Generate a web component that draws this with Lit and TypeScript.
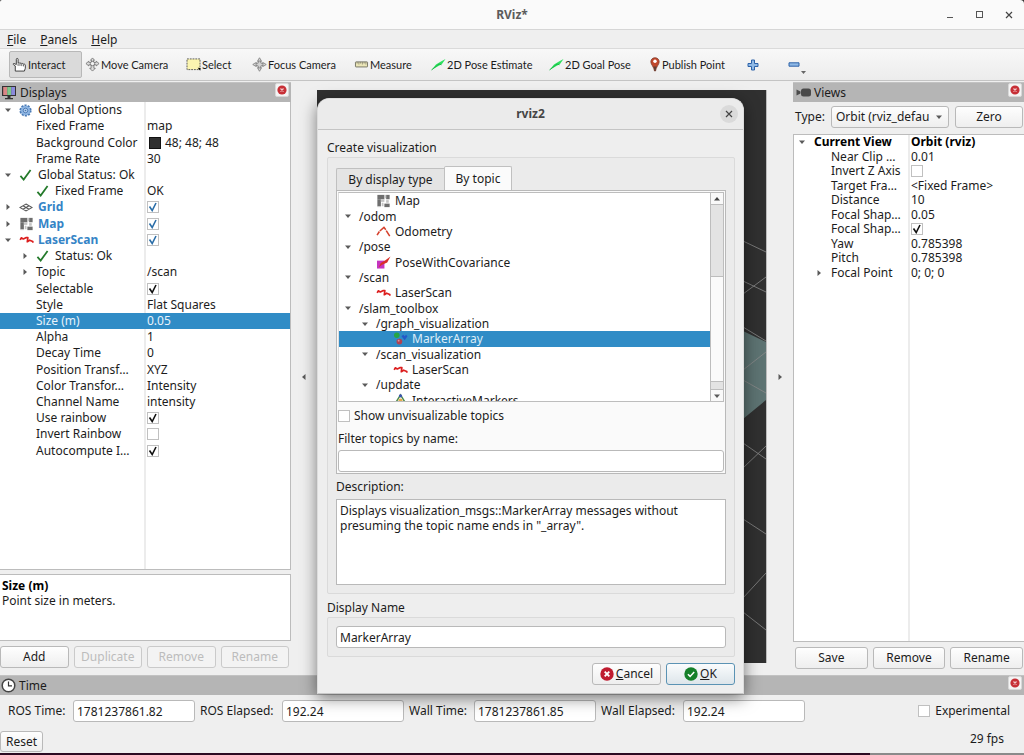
import { LitElement, html, css, svg, nothing } from "lit";
import type { TemplateResult } from "lit";
import { customElement, property } from "lit/decorators.js";
import { classMap } from "lit/directives/class-map.js";
import { styleMap } from "lit/directives/style-map.js";

/* ---------- icons ---------- */

const mapTiles = svg`
  <g fill="#6e6e6e"><rect x="1" y="1" width="8" height="5"/><rect x="1" y="6" width="4" height="8"/><rect x="11" y="1" width="4" height="5"/><rect x="9" y="11" width="6" height="4"/></g>
  <g fill="#c4c4c4"><rect x="5" y="6" width="4" height="3"/><rect x="9" y="1" width="2" height="4"/><rect x="11" y="7" width="3" height="3"/><rect x="6" y="10" width="2" height="4"/><rect x="1" y="14" width="4" height="1"/></g>`;

const icons: Record<string, { box: string; w: number; h: number; art: TemplateResult }> = {
  hand: { box: "0 0 16 16", w: 15, h: 15, art: svg`<path d="M3.500 15V9.500L1.600 8.200c-.7-.6-.3-1.500.6-1.300L4.600 8V2.400c0-1.200 1.900-1.200 1.900 0V6.600c.4-.6 1.700-.6 2 .2.500-.5 1.700-.4 2 .4.500-.5 1.600-.3 1.900.5.6-.3 1.800 0 1.800 1V12l-1 3z" fill="#fff" stroke="#3a3a3a" stroke-linejoin="round"/><path d="M6.500 7v2.500M8.500 7v2.500M10.400 7.500v2.200M12.300 8v2" stroke="#3a3a3a" stroke-width=".8"/>` },
  move: { box: "0 0 16 16", w: 15, h: 15, art: svg`<path d="M8 1l2.200 2.500H9v2.200h3V4.500L15 7l-3 2.500V8.300H9.500V12H11l-3 3-3-3h1.500V8.300H4v1.200L1 7l3-2.500v1.200h3V3.500H5.800z" fill="#ddd" stroke="#666" stroke-width=".8" stroke-linejoin="round"/><circle cx="8" cy="7" r="2.300" fill="#f3f3f3" stroke="#666" stroke-width=".8"/>` },
  select: { box: "0 0 16 14", w: 15, h: 13, art: svg`<rect x="1" y="1" width="14" height="11.500" fill="#fbf5b0" stroke="#555" stroke-dasharray="2 1"/><path d="M12.500 10.500l3 .2-.2 3z" fill="#000"/>` },
  focus: { box: "0 0 16 16", w: 15, h: 15, art: svg`<path d="M8 .8l2 3.200H9v2a2.600 2.600 0 0 1 1 1h2V6l3.200 2L12 10V9h-2a2.600 2.600 0 0 1-1 1v2h1l-2 3.200L6 12h1v-2a2.600 2.600 0 0 1-1-1H4v1L.8 8 4 6v1h2a2.600 2.600 0 0 1 1-1V4H6z" fill="#d4d4d4" stroke="#777" stroke-width=".8"/><circle cx="8" cy="8" r="3.600" fill="none" stroke="#8a8a8a" stroke-width=".9"/>` },
  ruler: { box: "0 0 15 8", w: 15, h: 7, art: svg`<rect x=".6" y="1" width="13.800" height="5.800" rx=".6" fill="#ebe6b8" stroke="#6c6a5c"/><path d="M2.500 1v2M4.500 1v3M6.500 1v2M8.500 1v3M10.500 1v2M12.500 1v3" stroke="#6c6a5c" stroke-width=".7"/>` },
  arrow: { box: "0 0 15 13", w: 15, h: 13, art: svg`<path d="M.5 12L5 6.500 9.500 3.800 14.500 1 11 6 6.500 8.500z" fill="#2fe05f"/><path d="M.5 12L8 6l2.500.8" stroke="#12b33e" stroke-width=".8" fill="none"/>` },
  pin: { box: "-1 0 12 15", w: 12, h: 15, art: svg`<path d="M5 .7C2.500.7.8 2.500.8 4.800.8 7.500 4 10 4.500 14h1C6 10 9.200 7.500 9.200 4.800 9.200 2.500 7.500.7 5 .7z" fill="#c0472c" stroke="#7a3524" stroke-width=".7"/><path d="M3.500 9.500L4.600 14h.8l1.100-4.500z" fill="#5b4038"/><circle cx="5" cy="4.300" r="1.700" fill="#fff"/>` },
  plus: { box: "0 0 12 12", w: 12, h: 12, art: svg`<path d="M4.500 1h3v3.500H11v3H7.500V11h-3V7.500H1v-3h3.500z" fill="#8fb9e6" stroke="#2d62a8" stroke-linejoin="round"/>` },
  minus: { box: "0 0 12 5", w: 12, h: 5, art: svg`<rect x="1" y=".8" width="10" height="3.400" fill="#8fb9e6" stroke="#2d62a8" stroke-linejoin="round"/>` },
  displays: { box: "0 0 16 15", w: 16, h: 15, art: svg`<rect x="1" y="1" width="14" height="10" fill="#333"/><rect x="2.200" y="2" width="4" height="8" fill="#d98686"/><rect x="6.200" y="2" width="4" height="8" fill="#7fc78a"/><rect x="10.200" y="2" width="3.800" height="8" fill="#8b8bdc"/><path d="M6.500 11h3v2H12v1.300H4V13h2.500z" fill="#333"/>` },
  camera: { box: "-2 0 17 9", w: 17, h: 9, art: svg`<rect x="5" y=".5" width="10" height="8" rx="2.500" fill="#4a4a4a"/><path d="M.5 1.500l4 2v2l-4 2z" fill="#4a4a4a"/>` },
  clock: { box: "0 0 15 15", w: 15, h: 15, art: svg`<circle cx="7.500" cy="7.500" r="6.300" fill="#fff" stroke="#444" stroke-width="1.500"/><path d="M7.500 3.500v4.300H11" fill="none" stroke="#333" stroke-width="1.200"/>` },
  gear: { box: "0 0 16 16", w: 13, h: 13, art: svg`<circle cx="8" cy="8" r="6.300" fill="#7aa5d8" stroke="#4a7ab5" stroke-width="2.400" stroke-dasharray="2.500 1.460"/><circle cx="8" cy="8" r="5.500" fill="#8db5e3"/><circle cx="8" cy="8" r="2.800" fill="#b9d2ee" stroke="#4271ad"/><circle cx="8" cy="8" r="1" fill="#4271ad"/>` },
  check: { box: "0 0 14 13", w: 13, h: 12, art: svg`<path d="M1.500 7.500L5 11.500 12.500 1" fill="none" stroke="#247a2b" stroke-width="1.900"/>` },
  grid: { box: "0 0 16 10", w: 14, h: 9, art: svg`<path d="M8 1l7 4-7 4-7-4zM4.500 3l7 4M11.500 3l-7 4" fill="none" stroke="#555" stroke-width="1.200"/>` },
  map: { box: "0 0 16 16", w: 15, h: 14, art: mapTiles },
  laser: { box: "0 0 16 10", w: 15, h: 9, art: svg`<path d="M1 5.500l1.200-2.300 2.300 1.200L7.800 2.800l1.700.2-.6 4.500 2.600-1.700L15 7.200v1.500" fill="none" stroke="#dc1e1e" stroke-width="1.900" stroke-linejoin="round"/>` },
  odom: { box: "0 0 16 12", w: 15, h: 11, art: svg`<path d="M1 10l2.500-4M4 5.500L8.500 1.500l2 2.500M11 5l3.800 6" fill="none" stroke="#d5402c" stroke-width="1.700"/>` },
  pose: { box: "0 0 16 14", w: 15, h: 13, art: svg`<rect x="1" y="5" width="8" height="8.500" fill="#c534c0"/><path d="M3 12l2-4.500L10 4.500l5.500-4L12 7 6.500 9.500z" fill="#d92f2a"/>` },
  markers: { box: "0 0 16 14", w: 15, h: 13, art: svg`<circle cx="4" cy="3.500" r="3" fill="#26a646"/><path d="M9 4.500l2-1.500 1.500 1.500L14 3l1.500 1.500L12.500 9z" fill="#2459c8"/><circle cx="6.800" cy="10.300" r="3.100" fill="#b04252"/><circle cx="6" cy="9.300" r="1" fill="#df97a0"/>` },
  interactive: { box: "0 0 16 15", w: 15, h: 14, art: svg`<path d="M8 2l5.500 9h-11z" fill="none" stroke="#4c8a50" stroke-width="1.600"/><circle cx="8" cy="3" r="1.700" fill="#3b54b0"/><circle cx="8" cy="8" r="2.200" fill="#e3ac4c"/><circle cx="3" cy="11" r="2" fill="#cc3333"/><circle cx="13" cy="11" r="2" fill="#2d9a3c"/>` },
  cancel: { box: "0 0 14 14", w: 14, h: 14, art: svg`<circle cx="7" cy="7" r="6.700" fill="#bf1b2f"/><path d="M4.700 4.700l4.600 4.600M9.300 4.700L4.700 9.300" stroke="#fff" stroke-width="1.900"/>` },
  ok: { box: "0 0 14 14", w: 14, h: 14, art: svg`<circle cx="7" cy="7" r="6.700" fill="#15802a"/><path d="M3.900 7.300l2.200 2.100 4.100-4.300" fill="none" stroke="#fff" stroke-width="1.500"/>` },
  dockClose: { box: "0 0 10 10", w: 10, h: 10, art: svg`<circle cx="5" cy="5" r="4.600" fill="#c72f36"/><path d="M3.500 3.500l3 3M6.500 3.500l-3 3" stroke="#f3c8ca" stroke-width="1.200"/>` },
  open: { box: "0 0 8 8", w: 8, h: 8, art: svg`<path d="M1 2.500h6L4 6z" fill="#5a5a5a"/>` },
  closed: { box: "0 0 8 8", w: 8, h: 8, art: svg`<path d="M2.500 1v6L6 4z" fill="#5a5a5a"/>` },
  left: { box: "0 0 8 8", w: 8, h: 8, art: svg`<path d="M5.500 1v6L2 4z" fill="#5a5a5a"/>` },
  up: { box: "0 0 8 8", w: 8, h: 8, art: svg`<path d="M1 5.500h6L4 2z" fill="#444"/>` },
  cross: { box: "0 0 8 8", w: 8, h: 8, art: svg`<path d="M1 1l6 6M7 1L1 7" stroke="#444" stroke-width="1.200"/>` },
  maximize: { box: "0 0 8 8", w: 8, h: 8, art: svg`<rect x=".5" y=".5" width="6" height="6" fill="none" stroke="#555"/>` },
  minimize: { box: "0 0 8 8", w: 8, h: 8, art: svg`<path d="M1 6.500h6" stroke="#555"/>` },
};

const icon = (name: string) => {
  const i = icons[name];
  return html`<svg class="icon" width=${i.w} height=${i.h} viewBox=${i.box} aria-hidden="true">${i.art}</svg>`;
};

/* ---------- shared styles ---------- */

const base = css`
  * { box-sizing: border-box; }
  button, input, select, textarea { font: inherit; color: inherit; margin: 0; }
  .icon { display: block; flex: none; }
  button { display: flex; align-items: center; justify-content: center; padding: 0; white-space: nowrap; }
  .push {
    height: 22px; border: 1px solid #b9b9b9; border-radius: 3px;
    background: linear-gradient(#fefefe, #eeeeee);
  }
  .push:disabled { color: #bcbcbc; border-color: #cacaca; background: #f3f3f3; }
  input[type="text"], textarea {
    border: 1px solid #b9b9b9; border-radius: 3px; background: #fff; outline: none;
  }
  input[type="text"] { height: 22px; padding: 0 3px; min-width: 0; }
  input[type="checkbox"] {
    appearance: none; width: 12px; height: 12px; flex: none; display: block;
    border: 1px solid #c0c0c0; background: #fff center / 10px 10px no-repeat;
  }
  input[type="checkbox"]:checked {
    background-image: url("data:image/svg+xml,%3Csvg xmlns='http://www.w3.org/2000/svg' viewBox='0 0 10 10'%3E%3Cpath d='M1.500 4.500L4.200 8.500 8 1' fill='none' stroke='%23111' stroke-width='1.600'/%3E%3C/svg%3E");
  }
  input[type="checkbox"].blue:checked {
    background-image: url("data:image/svg+xml,%3Csvg xmlns='http://www.w3.org/2000/svg' viewBox='0 0 10 10'%3E%3Cpath d='M1.500 4.500L4.200 8.500 8 1' fill='none' stroke='%232b6ea8' stroke-width='1.600'/%3E%3C/svg%3E");
  }
`;

/* ---------- property table ---------- */

interface Row {
  name: string;
  value?: string;
  checked?: boolean;
  level?: number;
  arrow?: "open" | "closed";
  icon?: string;
  swatch?: boolean;
  style?: "link" | "bold" | "selected";
}

@customElement("property-table")
class PropertyTable extends LitElement {
  @property({ attribute: false }) rows: Row[] = [];

  static styles = [base, css`
    :host { display: block; flex: 1; min-height: 0; overflow: hidden; position: relative;
      background: linear-gradient(#ececec, #ececec) calc(var(--name-column) - 1px) 0 / 2px 100% no-repeat #fff; }
    table { width: 100%; height: var(--table-height); table-layout: fixed; border-collapse: collapse; }
    .name-column { width: var(--name-column); }
    td { padding: 0; line-height: 14px; white-space: nowrap; vertical-align: middle; }
    td + td { padding-left: 2px; }
    .cell { display: flex; align-items: center; height: 14px; }
    .indent { flex: none; height: 8px; }
    .slot { flex: none; display: flex; width: var(--slot); padding-left: 4px; }
    .pic { flex: none; display: flex; width: 19px; align-items: center; }
    .link .cell > .text { color: #3584c6; font-weight: bold; }
    .bold { font-weight: bold; color: #000; }
    .selected { background: #308cc6; color: #e8f3fb; }
    .swatch { width: 12px; height: 12px; margin: 0 4px 0 2px; background: #303030; border: 1px solid #111; }
  `];

  render() {
    return html`<table>
      <colgroup><col class="name-column" /><col /></colgroup>
      <tbody>
        ${this.rows.map((r) => html`<tr class=${r.style ?? ""}>
          <td><div class="cell">
            <span class="indent" style=${styleMap({ width: `${(r.level ?? 0) * 17}px` })}></span>
            <span class="slot">${r.arrow ? icon(r.arrow) : nothing}</span>
            ${r.icon ? html`<span class="pic">${icon(r.icon)}</span>` : nothing}
            <span class="text">${r.name}</span>
          </div></td>
          <td><div class="cell">
            ${r.swatch ? html`<span class="swatch"></span>` : nothing}
            ${r.checked === undefined
              ? r.value ?? nothing
              : html`<input type="checkbox" aria-label=${r.name} class=${classMap({ blue: r.style === "link" })} .checked=${r.checked} />`}
          </div></td>
        </tr>`)}
      </tbody>
    </table>`;
  }
}

/* ---------- dock header ---------- */

@customElement("dock-header")
class DockHeader extends LitElement {
  @property() label = "";
  @property() glyph = "";

  static styles = [base, css`
    :host { display: flex; align-items: center; gap: 3px; height: 20px; padding: 0 2px 0 1px; background: #b5b5b5; border-top: 1px solid #c2c2c2; flex: none; }
    .label { flex: 1; }
    .close { width: 14px; height: 14px; background: #f4f4f4; border: 1px solid #d8d8d8; border-radius: 2px; align-self: flex-start; }
  `];

  render() {
    return html`${icon(this.glyph)}<span class="label">${this.label}</span>
      <button class="close" aria-label="Close ${this.label}">${icon("dockClose")}</button>`;
  }
}

/* ---------- dialog ---------- */

interface Topic { text: string; level: number; icon?: string; selected?: boolean }

const topics: Topic[] = [
  { text: "Map", level: 1, icon: "map" },
  { text: "/odom", level: 0 },
  { text: "Odometry", level: 1, icon: "odom" },
  { text: "/pose", level: 0 },
  { text: "PoseWithCovariance", level: 1, icon: "pose" },
  { text: "/scan", level: 0 },
  { text: "LaserScan", level: 1, icon: "laser" },
  { text: "/slam_toolbox", level: 0 },
  { text: "/graph_visualization", level: 1 },
  { text: "MarkerArray", level: 2, icon: "markers", selected: true },
  { text: "/scan_visualization", level: 1 },
  { text: "LaserScan", level: 2, icon: "laser" },
  { text: "/update", level: 1 },
  { text: "InteractiveMarkers", level: 2, icon: "interactive" },
];

@customElement("display-dialog")
class DisplayDialog extends LitElement {
  static styles = [base, css`
    :host { display: block; background: #eeeeee; border-radius: 12px 12px 0 0; border: 1px solid #dcdcdc; border-bottom-color: #c8c8c8;
      box-shadow: 0 4px 16px rgba(0, 0, 0, 0.5); }
    header { display: grid; grid-template-columns: 28px 1fr 28px; align-items: center; justify-items: center; height: 31px; background: #ebebeb; border-bottom: 1px solid #c4c4c4; border-radius: 11px 11px 0 0; }
    .title { grid-column: 2; font-weight: bold; color: #454545; }
    .close { width: 18px; height: 18px; border: 0; border-radius: 9px; background: #dadada; }
    .body { padding: 9px 8px 8px 9px; }
    .caption { display: block; line-height: 18px; }
    .group { border: 1px solid #dadada; border-radius: 2px; background: #ebebeb; padding: 8px; }
    .tabs { display: flex; align-items: flex-end; height: 24px; }
    .tab { height: 22px; min-width: 108px; border: 1px solid #c0c0c0; border-right: 0; border-bottom: 0; border-radius: 2px 0 0 0; background: #e4e4e4; }
    .tab.on { height: 24px; min-width: 68px; border-right: 1px solid #c0c0c0; border-radius: 2px 2px 0 0; background: #fbfbfb; }
    .pane { border: 1px solid #b9b9b9; background: #fafafa; padding: 1px; }
    .list { display: grid; grid-template-columns: 1fr 13px; height: 210px; border: 1px solid #bdbdbd; border-left-color: #ddd; background: #fff; overflow: hidden; }
    .tree { display: grid; grid-auto-rows: 1fr; height: 215px; margin: 0; padding: 0; list-style: none; }
    .tree li { display: flex; align-items: center; min-height: 0; line-height: 15px; white-space: nowrap; }
    .indent { flex: none; height: 8px; }
    .slot { flex: none; display: flex; width: 20px; padding-left: 5px; }
    .pic { flex: none; display: flex; width: 19px; padding-right: 4px; justify-content: center; }
    .selected { background: #308cc6; color: #dcedf8; }
    .scroll { display: flex; flex-direction: column; height: 208px; border-left: 1px solid #bdbdbd; background: #e3e3e3; }
    .step { display: grid; place-items: center; height: 12px; background: #f9f9f9; border-bottom: 1px solid #bdbdbd; }
    .step.down { border-bottom: 0; border-top: 1px solid #bdbdbd; }
    .before { flex: 72; }
    .thumb { flex: 105; background: #fafafa; border: solid #bdbdbd; border-width: 1px 0; }
    .after { flex: 7; }
    .tick { display: flex; align-items: center; gap: 4px; height: 28px; }
    .filter { display: block; line-height: 18px; margin-bottom: 2px; }
    .wide { display: block; width: 100%; }
    .describe { line-height: 25px; display: block; }
    textarea.wide { height: 86px; resize: none; border-radius: 0; padding: 3px 3px; line-height: 15px; overflow: hidden; }
    .named { margin-top: 5px; }
    .name-group { margin-bottom: 6px; }
    .actions { display: flex; justify-content: flex-end; gap: 5px; }
    .actions .push { width: 69px; gap: 2px; }
    .actions .default { border-color: #5b93b4; background: linear-gradient(#fafcfd, #dde5ea); }
  `];

  render() {
    return html`
      <header><span class="title">rviz2</span><button class="close" aria-label="Close">${icon("cross")}</button></header>
      <div class="body">
        <span class="caption">Create visualization</span>
        <div class="group">
          <div class="tabs" role="tablist">
            <button class="tab" role="tab" aria-selected="false">By display type</button>
            <button class="tab on" role="tab" aria-selected="true">By topic</button>
          </div>
          <div class="pane">
            <div class="list">
              <ul class="tree" role="tree">
                ${topics.map((t) => html`<li role="treeitem" class=${classMap({ selected: !!t.selected })}>
                  <span class="indent" style=${styleMap({ width: `${t.level * 17}px` })}></span>
                  <span class="slot">${t.icon ? nothing : icon("open")}</span>
                  ${t.icon ? html`<span class="pic">${icon(t.icon)}</span>` : nothing}
                  <span>${t.text}</span>
                </li>`)}
              </ul>
              <div class="scroll">
                <div class="step">${icon("up")}</div>
                <div class="before"></div><div class="thumb"></div><div class="after"></div>
                <div class="step down">${icon("open")}</div>
              </div>
            </div>
            <label class="tick"><input type="checkbox" />Show unvisualizable topics</label>
            <label class="filter" for="filter">Filter topics by name:</label>
            <input class="wide" type="text" id="filter" />
          </div>
          <label class="describe" for="description">Description:</label>
          <textarea class="wide" id="description" readonly .value=${'Displays visualization_msgs::MarkerArray messages without presuming the topic name ends in "_array".'}></textarea>
        </div>
        <label class="caption named" for="display-name">Display Name</label>
        <div class="group name-group"><input class="wide" type="text" id="display-name" .value=${"MarkerArray"} /></div>
        <div class="actions">
          <button class="push">${icon("cancel")}<span><u>C</u>ancel</span></button>
          <button class="push default">${icon("ok")}<span><u>O</u>K</span></button>
        </div>
      </div>`;
  }
}

/* ---------- data ---------- */

const displayRows: Row[] = [
  { name: "Global Options", arrow: "open", icon: "gear" },
  { name: "Fixed Frame", value: "map", level: 1 },
  { name: "Background Color", value: "48; 48; 48", level: 1, swatch: true },
  { name: "Frame Rate", value: "30", level: 1 },
  { name: "Global Status: Ok", arrow: "open", icon: "check" },
  { name: "Fixed Frame", value: "OK", level: 1, icon: "check" },
  { name: "Grid", arrow: "closed", icon: "grid", checked: true, style: "link" },
  { name: "Map", arrow: "closed", icon: "map", checked: true, style: "link" },
  { name: "LaserScan", arrow: "open", icon: "laser", checked: true, style: "link" },
  { name: "Status: Ok", level: 1, arrow: "closed", icon: "check" },
  { name: "Topic", value: "/scan", level: 1, arrow: "closed" },
  { name: "Selectable", level: 1, checked: true },
  { name: "Style", value: "Flat Squares", level: 1 },
  { name: "Size (m)", value: "0.05", level: 1, style: "selected" },
  { name: "Alpha", value: "1", level: 1 },
  { name: "Decay Time", value: "0", level: 1 },
  { name: "Position Transf…", value: "XYZ", level: 1 },
  { name: "Color Transfor…", value: "Intensity", level: 1 },
  { name: "Channel Name", value: "intensity", level: 1 },
  { name: "Use rainbow", level: 1, checked: true },
  { name: "Invert Rainbow", level: 1, checked: false },
  { name: "Autocompute I…", level: 1, checked: true },
];

const viewRows: Row[] = [
  { name: "Current View", value: "Orbit (rviz)", arrow: "open", style: "bold" },
  { name: "Near Clip …", value: "0.01", level: 1 },
  { name: "Invert Z Axis", level: 1, checked: false },
  { name: "Target Fra…", value: "<Fixed Frame>", level: 1 },
  { name: "Distance", value: "10", level: 1 },
  { name: "Focal Shap…", value: "0.05", level: 1 },
  { name: "Focal Shap…", level: 1, checked: true },
  { name: "Yaw", value: "0.785398", level: 1 },
  { name: "Pitch", value: "0.785398", level: 1 },
  { name: "Focal Point", value: "0; 0; 0", level: 1, arrow: "closed" },
];

const tools: [string, string][] = [
  ["hand", "Interact"], ["move", "Move Camera"], ["select", "Select"], ["focus", "Focus Camera"],
  ["ruler", "Measure"], ["arrow", "2D Pose Estimate"], ["arrow", "2D Goal Pose"], ["pin", "Publish Point"],
];

const clocks: [string, string][] = [
  ["ROS Time:", "1781237861.82"], ["ROS Elapsed:", "192.24"],
  ["Wall Time:", "1781237861.85"], ["Wall Elapsed:", "192.24"],
];

/* ---------- window ---------- */

@customElement("app-root")
class AppRoot extends LitElement {
  static styles = [base, css`
    :host { display: flex; flex-direction: column; position: relative; height: 100vh; overflow: hidden;
      background: #efefef; color: #1c1c1c; font: 12px/16px "Noto Sans", sans-serif; }
    .corners { background: #333; flex: none; }
    .titlebar { display: grid; grid-template-columns: 78px 1fr 78px; align-items: center; height: 30px; background: #fafafa; border-bottom: 1px solid #d6d6d6; border-radius: 2px 4px 0 0; }
    .title { grid-column: 2; text-align: center; font-weight: bold; color: #5c5c5c; }
    .window-buttons { display: flex; justify-content: space-between; padding-right: 11px; }
    .window-buttons button { border: 0; background: none; width: 8px; height: 8px; }
    nav { display: flex; gap: 14px; height: 19px; align-items: center; padding: 1px 7px 0; border-bottom: 1px solid #dadada; flex: none; }
    nav a { color: inherit; text-decoration: none; }
    .toolbar { display: grid; grid-template-columns: 73px 101px 66px 102px 77px 118px 100px 98px 41px 24px; align-items: center; height: 32px; padding: 0 0 0 9px; flex: none;
      background: linear-gradient(#f8f8f8, #ececec); border-bottom: 1px solid #c4c4c4; font-family: Lato, sans-serif; font-size: 11px; position: relative; }
    .toolbar button { justify-content: flex-start; gap: 1px; padding-left: 2px; height: 27px; border: 1px solid transparent; border-radius: 2px; background: none; }
    .toolbar .pressed { background: #dadada; border-color: #b8b8b8; }
    .grip { position: absolute; left: 2px; top: 9px; width: 4px; height: 15px; background: radial-gradient(circle, #c8c8c8 40%, transparent 50%) 0 0 / 2px 2px; }
    .more { position: relative; }
    .more .tiny { position: absolute; right: 2px; bottom: 2px; }
    .main { flex: 1; min-height: 0; display: grid; grid-template-columns: 291px 1fr 231px; padding: 1px 0 4px; }
    .dock { display: flex; flex-direction: column; min-height: 0; min-width: 0; }
    .frame { display: flex; min-height: 0; flex: 1; border: 1px solid #bcbcbc; border-width: 0 1px 1px 0; }
    .displays { --name-column: 145px; --table-height: 357px; --slot: 19px; }
    .views { --name-column: 115px; --table-height: 145px; --slot: 20px; }
    .views .frame { border-width: 1px 0 1px 1px; }
    .split { height: 4px; flex: none; background: radial-gradient(circle, #bbb 40%, transparent 50%) center / 2px 2px no-repeat; }
    .help { flex: none; height: 67px; border: 1px solid #bcbcbc; border-left: 0; background: #fff; padding: 3px 2px; line-height: 15px; }
    .help b { display: block; color: #000; }
    .buttons { display: grid; grid-auto-flow: column; grid-auto-columns: 1fr; gap: 5px; padding: 5px 2px 3px 0; flex: none; }
    .views .buttons { padding: 5px 1px 2px 2px; }
    .type { display: grid; grid-template-columns: auto 118px 1fr; align-items: center; gap: 6px; padding: 4px 1px 6px 2px; }
    .combo { position: relative; }
    .combo select { display: block; width: 100%; height: 22px; padding: 0 19px 0 4px; appearance: none; border: 1px solid #b9b9b9; border-radius: 3px; background: linear-gradient(#fefefe, #eeeeee); text-overflow: clip; overflow: hidden; white-space: nowrap; }
    .combo .icon { position: absolute; right: 6px; top: 7px; pointer-events: none; }
    .center { display: grid; grid-template-columns: 26px 1fr 26px; padding: 8px 0 8px; min-height: 0; }
    .collapse { display: flex; align-items: center; justify-content: center; }
    .scene { display: block; width: 100%; height: 100%; min-height: 0; background: #303030; border-right: 1px solid #bbb; }
    .time { display: flex; align-items: center; gap: 5px; padding: 5px 14px 4px 8px; flex: none; }
    .time .label { white-space: nowrap; min-width: 60px; }
    .time .label.long { min-width: 77px; }
    .time input[type="text"] { width: 122px; }
    .experimental { display: flex; align-items: center; gap: 5px; margin-left: auto; }
    .footer { display: flex; align-items: flex-start; justify-content: space-between; padding: 5px 20px 0 0; height: 27px; flex: none; }
    .footer .push { padding: 0 5px; height: 21px; }
    .desktop { height: 2px; flex: none; background: linear-gradient(90deg, #2c0a22 85%, #8a8a8a 85%); }
    display-dialog { position: absolute; left: 317px; top: 98px; width: 427px; }
  `];

  render() {
    return html`
      <div class="corners"><div class="titlebar">
        <span class="title">RViz*</span>
        <div class="window-buttons">
          <button aria-label="Minimize">${icon("minimize")}</button>
          <button aria-label="Maximize">${icon("maximize")}</button>
          <button aria-label="Close">${icon("cross")}</button>
        </div>
      </div></div>
      <nav><a href="#"><u>F</u>ile</a><a href="#"><u>P</u>anels</a><a href="#"><u>H</u>elp</a></nav>
      <div class="toolbar" role="toolbar">
        <span class="grip"></span>
        ${tools.map(([glyph, label], i) => html`<button class=${classMap({ pressed: i === 0 })}>${icon(glyph)}<span>${label}</span></button>`)}
        <button aria-label="Add tool">${icon("plus")}</button>
        <button class="more" aria-label="Remove tool">${icon("minus")}<svg class="tiny" width="5" height="4" viewBox="0 0 5 4"><path d="M0 0h5L2.500 3z" fill="#666" /></svg></button>
      </div>
      <div class="main">
        <section class="dock displays">
          <dock-header label="Displays" glyph="displays"></dock-header>
          <div class="frame"><property-table .rows=${displayRows}></property-table></div>
          <div class="split"></div>
          <div class="help"><b>Size (m)</b>Point size in meters.</div>
          <div class="buttons">
            <button class="push">Add</button><button class="push" disabled>Duplicate</button>
            <button class="push" disabled>Remove</button><button class="push" disabled>Rename</button>
          </div>
        </section>
        <div class="center">
          <div class="collapse">${icon("left")}</div>
          <svg class="scene" viewBox="317 90 450 573" preserveAspectRatio="xMaxYMin slice">
            <path d="M690 305L744 331 767 342V400L744 419 690 450z" fill="#5d7372" />
            <path d="M744 241l23 11M744 281l23 11M744 294l23-17M744 327l23 14M744 370l23-18M744 380l23 13M744 443l23 16M744 468l23-22M744 519l23 15M744 598l23-25M744 612l23 18" stroke="#8a8a8a" stroke-width=".8" fill="none" />
          </svg>
          <div class="collapse">${icon("closed")}</div>
        </div>
        <section class="dock views">
          <dock-header label="Views" glyph="camera"></dock-header>
          <div class="type">
            <label for="view-type">Type:</label>
            <div class="combo"><select id="view-type"><option>Orbit (rviz_default_plugins)</option></select>${icon("open")}</div>
            <button class="push">Zero</button>
          </div>
          <div class="frame"><property-table .rows=${viewRows}></property-table></div>
          <div class="buttons"><button class="push">Save</button><button class="push">Remove</button><button class="push">Rename</button></div>
        </section>
      </div>
      <dock-header label="Time" glyph="clock"></dock-header>
      <div class="time">
        ${clocks.map(([label, value], i) => html`
          <label class=${classMap({ label: true, long: i % 2 === 1 })} for="clock-${i}">${label}</label>
          <input type="text" id="clock-${i}" readonly .value=${value} />`)}
        <label class="experimental"><input type="checkbox" />Experimental</label>
      </div>
      <div class="footer"><button class="push">Reset</button><span>29 fps</span></div>
      <div class="desktop"></div>
      <display-dialog role="dialog" aria-label="rviz2"></display-dialog>
    `;
  }
}
